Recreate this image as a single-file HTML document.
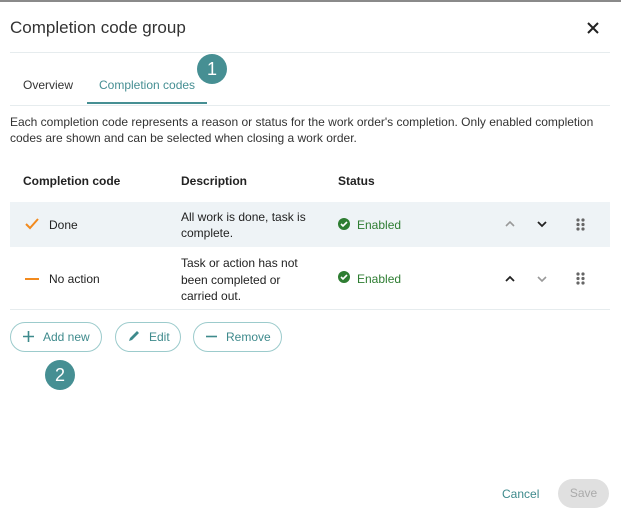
<!DOCTYPE html>
<html><head><meta charset="utf-8"><style>
*{box-sizing:border-box;margin:0;padding:0}
body{width:621px;height:518px;background:#fff;font-family:"Liberation Sans",sans-serif;color:#222;position:relative;overflow:hidden;font-size:12px}
.a{position:absolute}
.badge{position:absolute;width:30px;height:30px;border-radius:50%;background:#468f93;color:#fff;font-size:18px;text-align:center;line-height:30px}
.btn{position:absolute;top:322px;height:30px;border:1px solid #9ccbcc;border-radius:15px;color:#3e8a8c;font-size:12px;line-height:28px;padding-left:12px}
.btn svg{vertical-align:-1px;margin-right:9px}
.en{color:#2e7d32}
</style></head><body>
<div class="a" style="left:0;top:0;width:621px;height:2px;background:#8a8a8a"></div>
<div class="a" style="left:10px;top:18px;font-size:17px;color:#333">Completion code group</div>
<svg class="a" style="left:587px;top:22px" width="12" height="12"><path d="M1 1l10 10M11 1L1 11" stroke="#222" stroke-width="2"/></svg>
<div class="a" style="left:10px;top:52px;width:600px;height:1px;background:#e6ecee"></div>
<div class="a" style="left:23px;top:78px;color:#333">Overview</div>
<div class="a" style="left:99px;top:78px;color:#468f93">Completion codes</div>
<div class="a" style="left:87px;top:102px;width:120px;height:2px;background:#468f93"></div>
<div class="a" style="left:10px;top:105px;width:600px;height:1px;background:#e6ecee"></div>
<div class="badge" style="left:197px;top:54px">1</div>
<div class="a" style="left:10px;top:114px;width:590px;line-height:16px;color:#333">Each completion code represents a reason or status for the work order's completion. Only enabled completion codes are shown and can be selected when closing a work order.</div>
<div class="a" style="left:23px;top:174px;font-weight:bold;color:#222">Completion code</div>
<div class="a" style="left:181px;top:174px;font-weight:bold;color:#222">Description</div>
<div class="a" style="left:338px;top:174px;font-weight:bold;color:#222">Status</div>
<div class="a" style="left:10px;top:202px;width:600px;height:45px;background:#eef3f6"></div>
<svg class="a" style="left:24px;top:217px" width="16" height="14"><path d="M2 7l4 4 8-9" stroke="#f28a1e" stroke-width="2" fill="none"/></svg>
<div class="a" style="left:49px;top:218px">Done</div>
<div class="a" style="left:181px;top:209px;line-height:16px;width:160px">All work is done, task is<br>complete.</div>
<svg class="a" style="left:338px;top:218px" width="12" height="12"><circle cx="6" cy="6" r="6" fill="#2e7d32"/><path d="M3 6l2 2 4-4" stroke="#fff" stroke-width="1.6" fill="none"/></svg>
<div class="a en" style="left:357px;top:218px">Enabled</div>
<svg class="a" style="left:505px;top:220px" width="10" height="8"><path d="M1 6l4-4 4 4" stroke="#999" stroke-width="1.6" fill="none"/></svg>
<svg class="a" style="left:537px;top:220px" width="10" height="8"><path d="M1 2l4 4 4-4" stroke="#222" stroke-width="1.8" fill="none"/></svg>
<svg class="a" style="left:576px;top:218px" width="9" height="13"><g fill="#666"><circle cx="2" cy="2" r="1.6"/><circle cx="7" cy="2" r="1.6"/><circle cx="2" cy="6.5" r="1.6"/><circle cx="7" cy="6.5" r="1.6"/><circle cx="2" cy="11" r="1.6"/><circle cx="7" cy="11" r="1.6"/></g></svg>
<div class="a" style="left:25px;top:278px;width:14px;height:2px;background:#f28a1e"></div>
<div class="a" style="left:49px;top:272px">No action</div>
<div class="a" style="left:181px;top:255px;line-height:16.5px">Task or action has not<br>been completed or<br>carried out.</div>
<svg class="a" style="left:338px;top:271px" width="12" height="12"><circle cx="6" cy="6" r="6" fill="#2e7d32"/><path d="M3 6l2 2 4-4" stroke="#fff" stroke-width="1.6" fill="none"/></svg>
<div class="a en" style="left:357px;top:272px">Enabled</div>
<svg class="a" style="left:505px;top:275px" width="10" height="8"><path d="M1 6l4-4 4 4" stroke="#222" stroke-width="1.8" fill="none"/></svg>
<svg class="a" style="left:537px;top:275px" width="10" height="8"><path d="M1 2l4 4 4-4" stroke="#999" stroke-width="1.6" fill="none"/></svg>
<svg class="a" style="left:576px;top:272px" width="9" height="13"><g fill="#666"><circle cx="2" cy="2" r="1.6"/><circle cx="7" cy="2" r="1.6"/><circle cx="2" cy="6.5" r="1.6"/><circle cx="7" cy="6.5" r="1.6"/><circle cx="2" cy="11" r="1.6"/><circle cx="7" cy="11" r="1.6"/></g></svg>
<div class="a" style="left:10px;top:309px;width:600px;height:1px;background:#e6ecee"></div>
<div class="btn" style="left:10px;width:92px"><svg width="11" height="11"><path d="M5.5 0v11M0 5.5h11" stroke="#3e8a8c" stroke-width="1.6"/></svg>Add new</div>
<div class="btn" style="left:115px;width:66px"><svg width="12" height="12"><path d="M1 11l1-3 6-6 2 2-6 6z M9 1l2 2-1 1-2-2z" fill="#3e8a8c"/></svg>Edit</div>
<div class="btn" style="left:193px;width:89px"><svg width="11" height="11"><path d="M0 5.5h11" stroke="#3e8a8c" stroke-width="1.6"/></svg>Remove</div>
<div class="badge" style="left:45px;top:360px">2</div>
<div class="a" style="left:502px;top:487px;color:#3e8a8c">Cancel</div>
<div class="a" style="left:558px;top:479px;width:51px;height:29px;border-radius:15px;background:#e0e0e0;color:#aaa;text-align:center;line-height:29px;font-size:12px">Save</div>
</body></html>
